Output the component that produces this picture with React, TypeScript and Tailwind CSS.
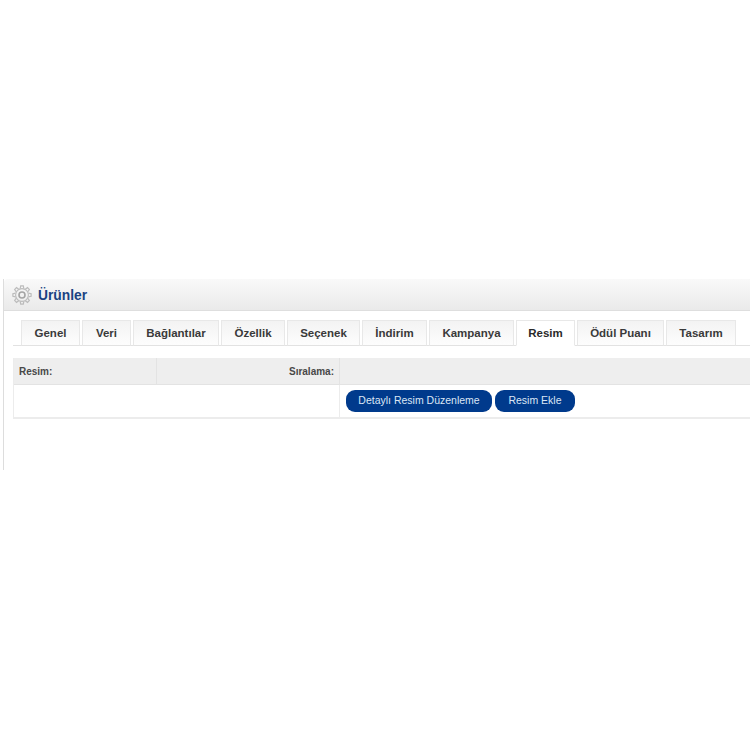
const tabs = [
  { label: "Genel", w: "w-[59px]" },
  { label: "Veri", w: "w-[49px]" },
  { label: "Bağlantılar", w: "w-[86px]" },
  { label: "Özellik", w: "w-[64px]" },
  { label: "Seçenek", w: "w-[73px]" },
  { label: "İndirim", w: "w-[65px]" },
  { label: "Kampanya", w: "w-[85px]" },
  { label: "Resim", w: "w-[59px]", active: true },
  { label: "Ödül Puanı", w: "w-[87px]" },
  { label: "Tasarım", w: "w-[70px]" },
];

function Gear() {
  const teeth = [0, 45, 90, 135, 180, 225, 270, 315];
  return (
    <svg width="20" height="20" viewBox="0 0 20 20" fill="none" stroke="#bcbcbc" className="shrink-0">
      {teeth.map((a) => (
        <path key={a} d="M8.2 3.6 8.7 .9h2.6l.5 2.7" strokeWidth="1.2" transform={`rotate(${a} 10 10)`} />
      ))}
      <circle cx="10" cy="10" r="6.4" strokeWidth="1.1" />
      <circle cx="10" cy="10" r="3" strokeWidth="1.6" stroke="#a4a4a4" />
    </svg>
  );
}

export default function App() {
  return (
    <div className="w-[750px] h-[750px] bg-white overflow-hidden pt-[279px] pl-[3px] font-['Liberation_Sans',Arial,sans-serif]">
      <div className="w-[747px] h-[191px] border-l border-[#dddddd] overflow-hidden">
        <div className="h-[32px] flex items-center gap-[6px] pl-[8px] pt-[1px] bg-gradient-to-b from-[#f9f9f9] to-[#eaeaea] border-b border-[#dedede] rounded-tl-[4px]">
          <Gear />
          <span className="mt-[2px] text-[13.8px] font-bold text-[#1a4382]">Ürünler</span>
        </div>
        <div className="pt-[9px] pl-[9px]">
          <div className="flex gap-[2px] pl-[8px] h-[26px] border-b border-[#e2e2e2]">
            {tabs.map((t) => (
              <div
                key={t.label}
                className={`${t.w} shrink-0 h-[26px] pt-[2px] flex items-center justify-center text-[11.5px] font-bold border border-[#e8e8e8] ${
                  t.active
                    ? "bg-white text-[#2a2a2a] border-b-white"
                    : "bg-gradient-to-b from-[#f3f3f3] to-[#fdfdfd] text-[#3a3a3a] border-b-[#e2e2e2]"
                }`}
              >
                {t.label}
              </div>
            ))}
          </div>
          <div className="mt-[12px] w-[800px] border-l border-b-2 border-[#ececec] h-[61px] flex flex-col">
            <div className="h-[27px] shrink-0 flex bg-[#eeeeee] border-b border-[#e3e3e3] text-[10px] font-bold text-[#484848]">
              <div className="w-[143px] flex items-center pl-[5px] border-r border-[#e3e3e3]">Resim:</div>
              <div className="w-[183px] flex items-center justify-end pr-[5px] border-r border-[#e3e3e3]">Sıralama:</div>
            </div>
            <div className="flex-1 flex">
              <div className="w-[326px] border-r border-[#ececec]"></div>
              <div className="flex gap-[3px] pl-[6px] pt-[5px] text-[10.5px] text-[#dbe6f5]">
                <div className="w-[146px] h-[22px] flex items-center justify-center rounded-[9px] bg-[#003a8c]">Detaylı Resim Düzenleme</div>
                <div className="w-[80px] h-[22px] flex items-center justify-center rounded-[9px] bg-[#003a8c]">Resim Ekle</div>
              </div>
            </div>
          </div>
        </div>
      </div>
    </div>
  );
}
